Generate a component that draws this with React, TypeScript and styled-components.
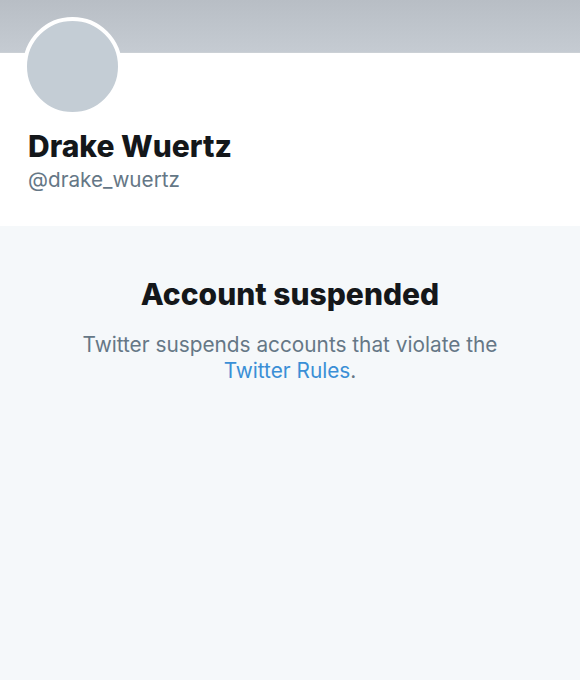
import styled, { createGlobalStyle } from 'styled-components';

const GlobalStyle = createGlobalStyle`
  html, body {
    margin: 0;
    padding: 0;
    background: #f5f8fa;
    font-family: Inter, "Noto Sans", sans-serif;
    -webkit-font-smoothing: antialiased;
  }
`;

const profile = {
  name: 'Drake Wuertz',
  handle: '@drake_wuertz',
};

export default function App() {
  return (
    <Page>
      <GlobalStyle />
      <Header>
        <Banner />
        <ProfileInfo>
          <Avatar />
          <Name>{profile.name}</Name>
          <Handle>{profile.handle}</Handle>
        </ProfileInfo>
      </Header>
      <Notice>
        <NoticeTitle>Account suspended</NoticeTitle>
        <NoticeText>
          Twitter suspends accounts that violate the <RulesLink href="#">Twitter Rules</RulesLink>.
        </NoticeText>
      </Notice>
    </Page>
  );
}

const Page = styled.div`
  width: 580px;
  min-height: 680px;
  background: #f5f8fa;
`;

const Header = styled.header`
  background: #ffffff;
`;

const Banner = styled.div`
  height: 52px;
  background: linear-gradient(180deg, #b8bec5 0%, #c5cbd2 100%);
  border-bottom: 1px solid #cbd0d5;
`;

const ProfileInfo = styled.div`
  display: flex;
  flex-direction: column;
  padding: 0 28px 33px;
`;

const Avatar = styled.div`
  width: 91px;
  height: 91px;
  margin: -36px 0 0 -5px;
  border-radius: 50%;
  border: 4px solid #ffffff;
  background: #c4cdd5;
`;

const Name = styled.h1`
  margin: 13px 0 0;
  font-size: 30px;
  font-weight: 800;
  line-height: 34px;
  color: #14171a;
`;

const Handle = styled.div`
  margin-top: 4px;
  font-size: 20.7px;
  line-height: 26px;
  color: #657786;
`;

const Notice = styled.section`
  display: flex;
  flex-direction: column;
  align-items: center;
  padding: 50px 50px 0;
  text-align: center;
`;

const NoticeTitle = styled.h2`
  margin: 0;
  font-size: 30px;
  font-weight: 800;
  line-height: 36px;
  color: #14171a;
`;

const NoticeText = styled.p`
  margin: 20px 0 0;
  max-width: 440px;
  font-size: 20.8px;
  line-height: 26px;
  color: #657786;
`;

const RulesLink = styled.a`
  color: #3a8fd6;
  text-decoration: none;
`;
